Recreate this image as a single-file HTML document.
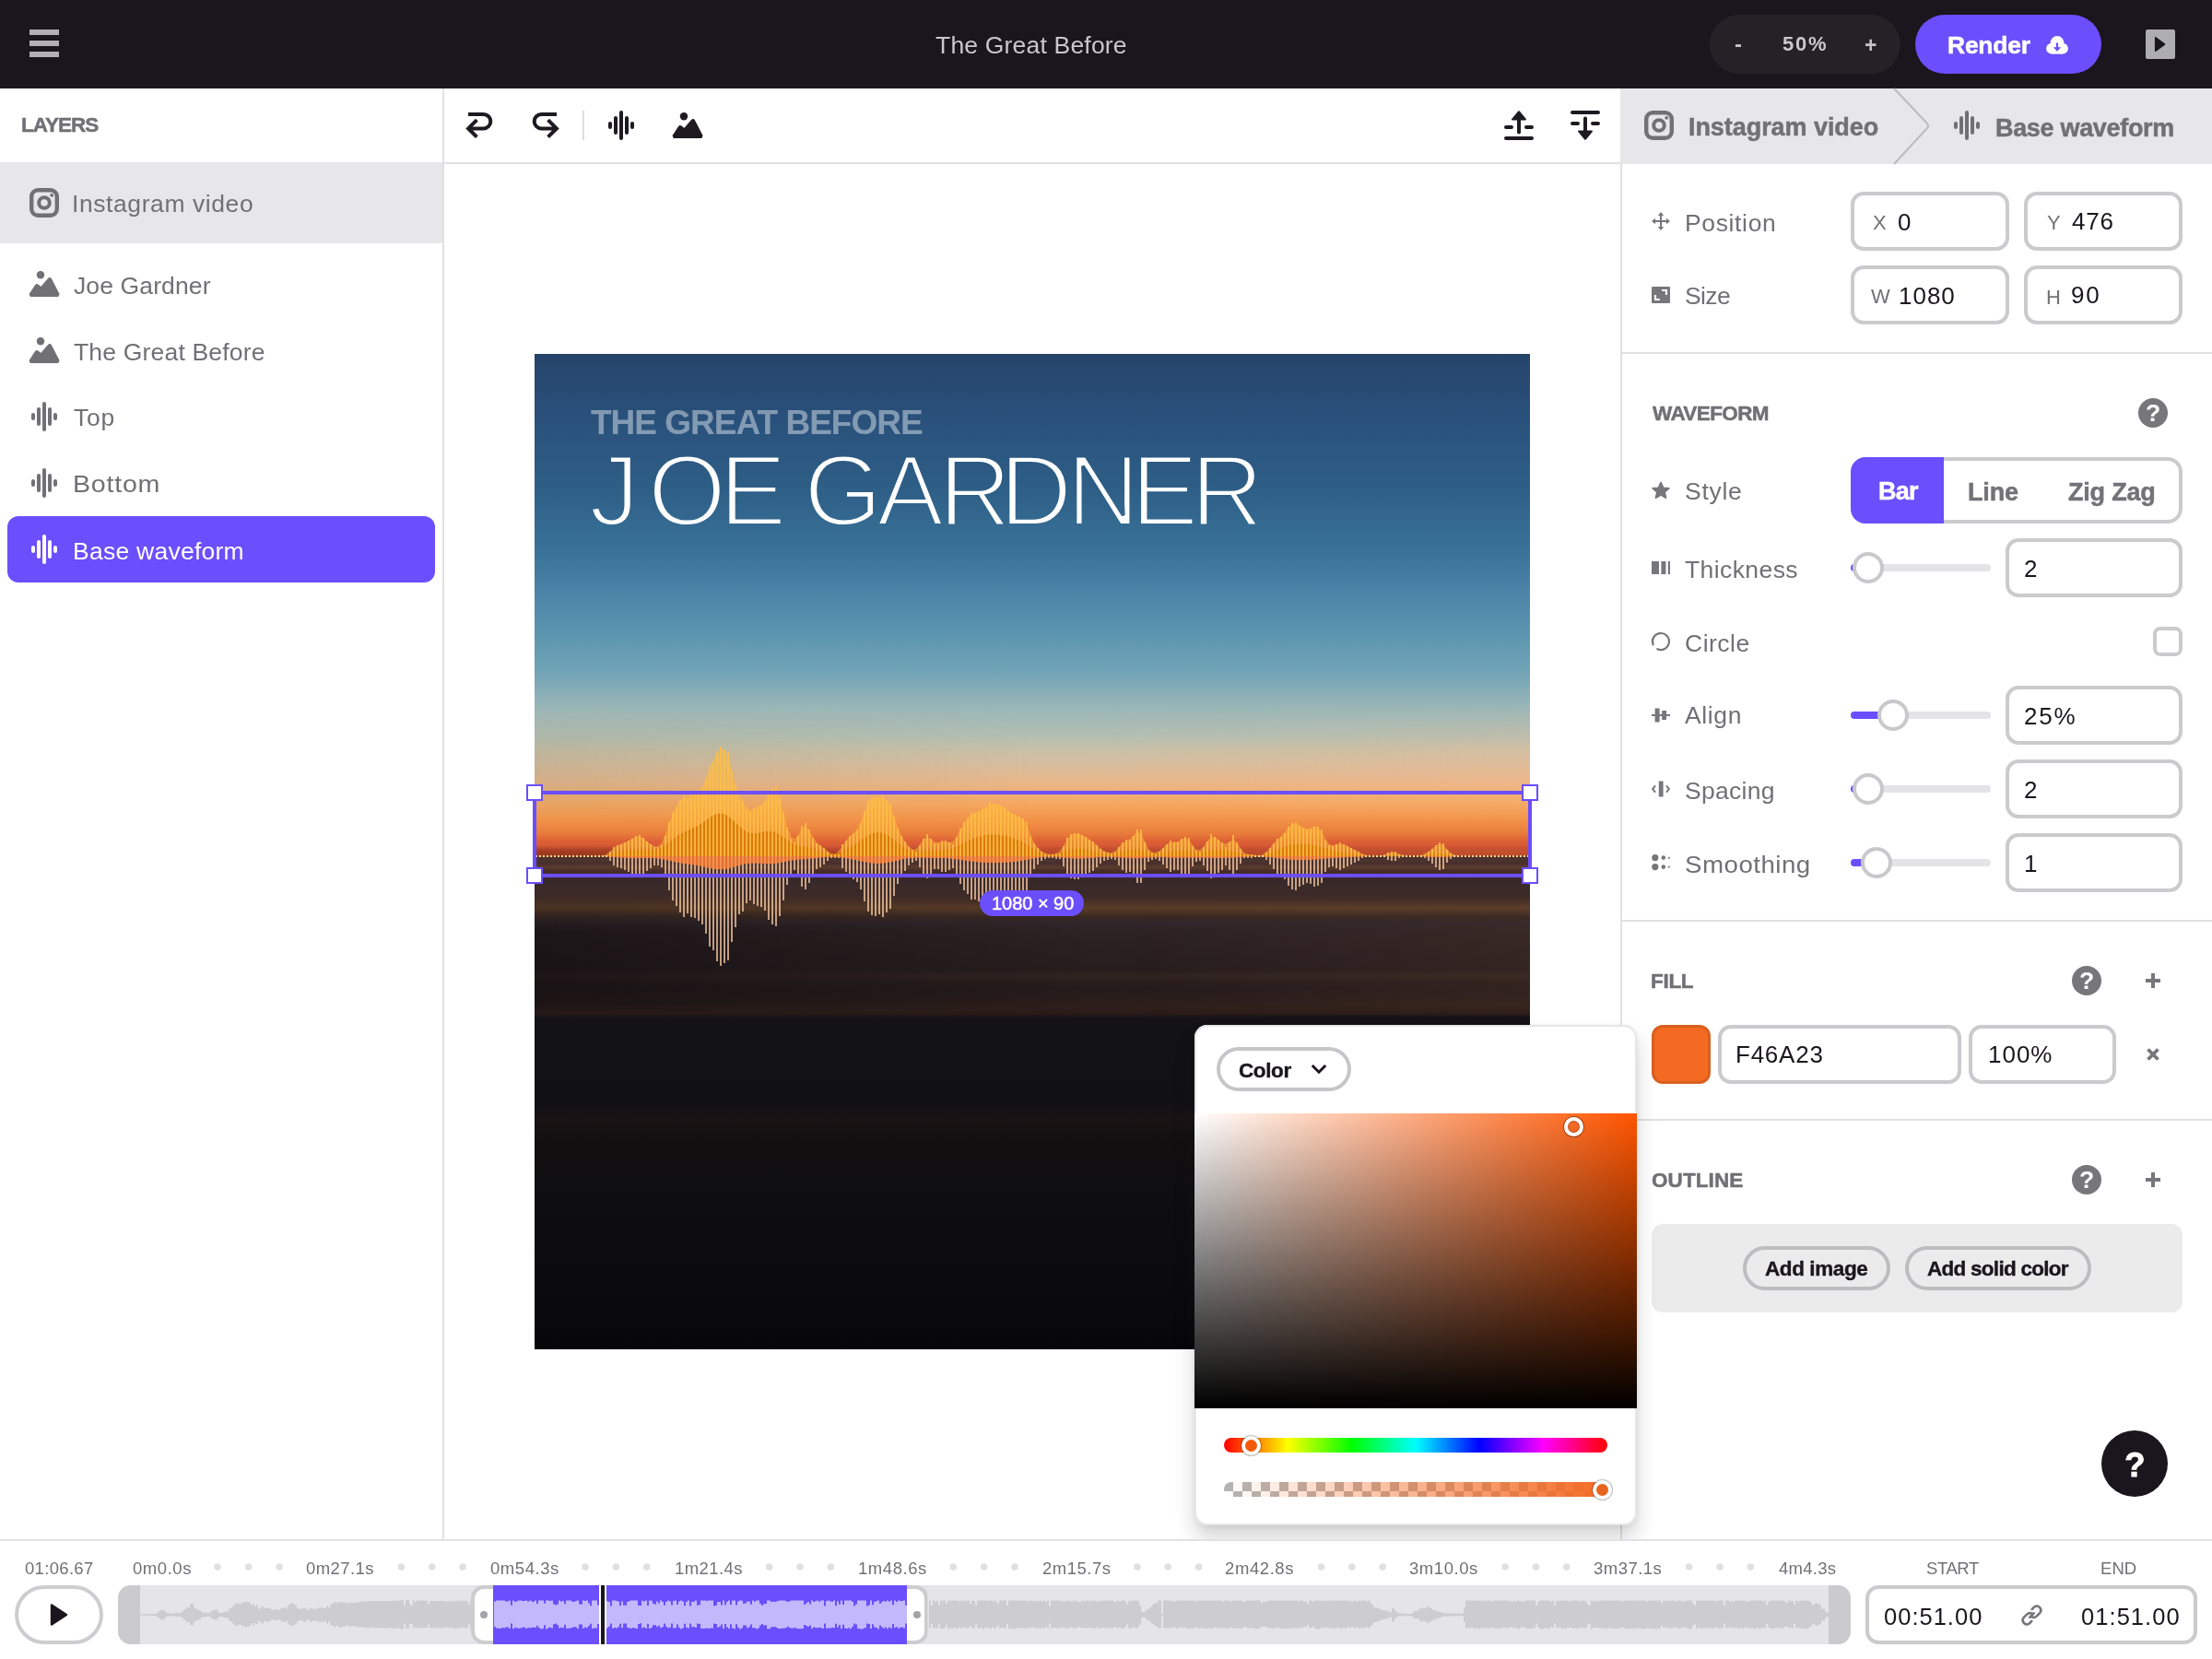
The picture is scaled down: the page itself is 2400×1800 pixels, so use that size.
<!DOCTYPE html>
<html lang="en">
<head>
<meta charset="utf-8">
<title>The Great Before</title>
<style>
*{box-sizing:border-box;margin:0;padding:0}
html,body{width:2400px;height:1800px;overflow:hidden;background:#fff}
body{font-family:"Liberation Sans",sans-serif;color:#717075;position:relative}
.abs{position:absolute}
.t{position:absolute;white-space:nowrap;line-height:1;will-change:transform}
.b{font-weight:700}
svg{position:absolute;overflow:visible}
/* top bar */
#top{left:0;top:0;width:2400px;height:96px;background:#19161d}
/* panels */
#left{left:0;top:96px;width:482px;height:1576px;border-right:2px solid #e1e1e4;background:#fff}
#toolbar{left:482px;top:96px;width:1276px;height:82px;border-bottom:2px solid #e1e1e4;background:#fff}
#right{left:1758px;top:96px;width:642px;height:1576px;border-left:2px solid #e1e1e4;background:#fff}
#crumb{left:1758px;top:96px;width:642px;height:82px;background:#e7e7e9}
#bottom{left:0;top:1670px;width:2400px;height:130px;border-top:2px solid #e1e1e4;background:#fff}
.row{position:absolute;left:0;width:480px;height:72px}
.lbl{font-size:26.5px;color:#717075}
.inp{position:absolute;border:4px solid #cbcbce;border-radius:14px;background:#fff;height:64px}
.inp .t{top:17px;font-size:26px;color:#19161d}
.inp .p{color:#717075}
.div{position:absolute;left:1760px;width:640px;height:2px;background:#e1e1e4}
.plab{font-size:26.5px;color:#717075}
.hd{font-size:22.5px;font-weight:700;color:#717075;-webkit-text-stroke:.5px #717075}
.track{position:absolute;height:8px;border-radius:4px;background:#e4e4e6}
.fillt{position:absolute;height:8px;border-radius:4px;background:#6b4efc}
.thumb{position:absolute;width:34px;height:34px;border-radius:50%;border:4px solid #c9c9cc;background:#fff}
.pill{position:absolute;height:48px;border:4px solid #bdbdc0;border-radius:24px;background:transparent}
.pill .t{font-size:22.5px;font-weight:700;color:#19161d;top:9px;-webkit-text-stroke:.4px #19161d}
</style>
</head>
<body>
<!-- TOP BAR -->
<div id="top" class="abs">
  <div class="abs" style="left:32px;top:32px;width:32px;height:6px;background:#b1b0b4"></div>
  <div class="abs" style="left:32px;top:44px;width:32px;height:6px;background:#b1b0b4"></div>
  <div class="abs" style="left:32px;top:56px;width:32px;height:6px;background:#b1b0b4"></div>
  <div class="t" id="ttl" style="left:1015.38px;top:36.16px;font-size:26.5px;color:#c9c8cd;letter-spacing:0.19px">The Great Before</div>
  <div class="abs" style="left:1855px;top:16px;width:207px;height:64px;border-radius:32px;background:#242127"></div>
  <div class="t b" style="left:1882px;top:35.5px;font-size:24px;color:#c4c3c7">-</div>
  <div class="t b" id="pct" style="left:1933.79px;top:37.3px;font-size:22px;color:#c9c8cc;letter-spacing:1.75px">50%</div>
  <div class="t b" style="left:2022.5px;top:38px;font-size:23px;color:#c4c3c7">+</div>
  <div class="abs" style="left:2078px;top:16px;width:202px;height:64px;border-radius:32px;background:#6b4efc"></div>
  <div class="t b" id="rnd" style="left:2113.06px;top:36.1px;font-size:26.5px;color:#fff;letter-spacing:-0.26px;-webkit-text-stroke:.5px #fff">Render</div>
  <svg style="left:2220px;top:39px" width="24" height="20" viewBox="0 0 24 20"><g fill="#fff"><circle cx="12" cy="7.3" r="7.3"/><circle cx="6" cy="13.7" r="5.9"/><circle cx="18" cy="13.7" r="5.9"/><rect x="6" y="10" width="12" height="9.6"/></g><path fill="#6b4efc" d="M10.9 7.6h2.2v4.6h3.1L12 16.8L7.8 12.2h3.1z"/></svg>
  <div class="abs" style="left:2328px;top:32px;width:32px;height:32px;background:#aeadb1;border-radius:2px"></div>
  <svg style="left:2328px;top:32px" width="32" height="32" viewBox="0 0 32 32"><path fill="#19161d" d="M10.8 8.9v14.2l9.6-7.1z" stroke="#19161d" stroke-width="1.8" stroke-linejoin="round"/></svg>
</div>
<!-- ICON DEFS -->
<svg width="0" height="0" style="left:-100px;top:-100px">
  <defs>
    <g id="i-wave"><path d="M2 14v4M8 8v16M14 2v28M20 8v16M26 14v4" fill="none" stroke="currentColor" stroke-width="4" stroke-linecap="round"/></g>
    <g id="i-img"><circle cx="12" cy="4.2" r="4.2" fill="currentColor"/><path d="M1.5 27 L0.6 25.2 L7 15.6 Q7.8 14.6 8.8 15.4 L12.6 18.2 L20.8 8.6 Q22 7.4 23 8.8 L31.5 25.2 L30.6 27 Z" fill="currentColor" stroke="currentColor" stroke-width="2" stroke-linejoin="round"/></g>
    <g id="i-insta"><rect x="2.2" y="2.2" width="27.6" height="27.6" rx="7" fill="none" stroke="currentColor" stroke-width="4.4"/><circle cx="16" cy="16" r="5.8" fill="none" stroke="currentColor" stroke-width="4"/><circle cx="24.2" cy="7.8" r="1.9" fill="currentColor"/></g>
    <g id="i-q"><circle cx="16" cy="16" r="16" fill="#77767b"/></g>
  </defs>
</svg>
<!-- LEFT PANEL -->
<div id="left" class="abs"></div>
<div class="t b" id="layers" style="left:23.45px;top:125.22px;font-size:22.5px;color:#717075;-webkit-text-stroke:.5px #717075;letter-spacing:-0.98px">LAYERS</div>
<div class="abs" style="left:0;top:176px;width:480px;height:88px;background:#e7e7e9"></div>
<svg style="left:32px;top:204px;color:#717075" width="32" height="32"><use href="#i-insta"/></svg>
<div class="t lbl" id="l0" style="left:78.41px;top:208px;letter-spacing:0.58px">Instagram video</div>

<svg style="left:32px;top:294px;color:#717075" width="32" height="28"><use href="#i-img"/></svg>
<div class="t lbl" id="l1" style="left:80.01px;top:296.96px;letter-spacing:0.12px">Joe Gardner</div>
<svg style="left:32px;top:366px;color:#717075" width="32" height="28"><use href="#i-img"/></svg>
<div class="t lbl" id="l2" style="left:80.2px;top:369px;letter-spacing:0.18px">The Great Before</div>
<svg style="left:34px;top:436px;color:#717075" width="28" height="32"><use href="#i-wave"/></svg>
<div class="t lbl" id="l3" style="left:80px;top:439.8px;letter-spacing:0.79px">Top</div>
<svg style="left:34px;top:508px;color:#717075" width="28" height="32"><use href="#i-wave"/></svg>
<div class="t lbl" id="l4" style="left:79.2px;top:512px;letter-spacing:0.69px;transform:scaleX(1.08);transform-origin:0 0">Bottom</div>
<div class="abs" style="left:8px;top:560px;width:464px;height:72px;border-radius:12px;background:#6b4efc"></div>
<svg style="left:34px;top:580px;color:#fff" width="28" height="32"><use href="#i-wave"/></svg>
<div class="t lbl" id="l5" style="left:79.34px;top:585px;color:#fff;letter-spacing:0.25px">Base waveform</div>
<!-- TOOLBAR -->
<div id="toolbar" class="abs"></div>
<svg style="left:504px;top:120px" width="32" height="32" viewBox="0 0 32 32"><path d="M4 4H20.6A7.7 7.7 0 0 1 20.6 19.4H5M13.4 10.1L4.1 19.4L13.4 28.7" fill="none" stroke="#1d1b21" stroke-width="4"/></svg>
<svg style="left:576px;top:120px" width="32" height="32" viewBox="0 0 32 32"><path d="M28 4H11.4A7.7 7.7 0 0 0 11.4 19.4H27M18.6 10.1L27.9 19.4L18.6 28.7" fill="none" stroke="#1d1b21" stroke-width="4"/></svg>
<div class="abs" style="left:632px;top:120px;width:2px;height:32px;background:#dededf"></div>
<svg style="left:660px;top:120px;color:#1d1b21" width="28" height="32"><use href="#i-wave"/></svg>
<svg style="left:730px;top:122px;color:#1d1b21" width="32" height="28"><use href="#i-img"/></svg>
<svg style="left:1632px;top:120px" width="32" height="32" viewBox="0 0 32 32"><path d="M2 30H30M2 18H8M24 18H30M16 23.5V8" fill="none" stroke="#1d1b21" stroke-width="4" stroke-linecap="round"/><path d="M16 1.2L23 9.6H9z" fill="#1d1b21" stroke="#1d1b21" stroke-width="2" stroke-linejoin="round"/></svg>
<svg style="left:1704px;top:120px" width="32" height="32" viewBox="0 0 32 32"><path d="M2 2H30M2 14H8M24 14H30M16 8.5V24" fill="none" stroke="#1d1b21" stroke-width="4" stroke-linecap="round"/><path d="M16 30.8L23 22.4H9z" fill="#1d1b21" stroke="#1d1b21" stroke-width="2" stroke-linejoin="round"/></svg>
<!-- BREADCRUMB -->
<div id="right" class="abs"></div>
<div id="crumb" class="abs"></div>
<svg style="left:1784px;top:120px;color:#717075" width="32" height="32"><use href="#i-insta"/></svg>
<div class="t b" id="c0" style="left:1831.64px;top:125.08px;font-size:27px;color:#717075;-webkit-text-stroke:.5px #717075;letter-spacing:-0.06px">Instagram video</div>
<svg style="left:2050px;top:96px" width="50" height="82" viewBox="0 0 50 82"><path d="M5 0L41 38Q43 40.5 41 43L5 82" fill="none" stroke="#bcbcbf" stroke-width="2"/></svg>
<svg style="left:2120px;top:120px;color:#717075" width="28" height="32"><use href="#i-wave"/></svg>
<div class="t b" id="c1" style="left:2165.49px;top:125.59px;font-size:27px;color:#717075;-webkit-text-stroke:.5px #717075;letter-spacing:-0.32px">Base waveform</div>
<!-- RIGHT PANEL: position/size -->
<svg style="left:1792px;top:230px" width="20" height="20" viewBox="0 0 20 20"><path d="M10 1.5V18.5M1.5 10H18.5" stroke="#77767b" stroke-width="2" fill="none"/><path d="M10 0L13.2 4H6.8zM10 20L13.2 16H6.8zM0 10L4 6.8V13.2zM20 10L16 6.8V13.2z" fill="#77767b"/></svg>
<div class="t plab" id="p0" style="left:1827.89px;top:228.8px;letter-spacing:0.64px">Position</div>
<svg style="left:1792px;top:311px" width="20" height="18" viewBox="0 0 20 18"><rect width="20" height="18" rx="1" fill="#77767b"/><path d="M11 4H16V9M9 14H4V9" fill="none" stroke="#fff" stroke-width="2.2"/></svg>
<div class="t plab" id="p1" style="left:1828.18px;top:308px;letter-spacing:-0.63px">Size</div>
<div class="inp" style="left:2008px;top:208px;width:172px"><div class="t p" id="ix" style="left:19.99px;font-size:22px;top:19.12px">X</div><div class="t" id="vx" style="left:47.28px;top:16.19px">0</div></div>
<div class="inp" style="left:2196px;top:208px;width:172px"><div class="t p" id="iy" style="left:20.6px;font-size:22px;top:19.08px">Y</div><div class="t" id="vy" style="left:48.44px;top:15.4px;letter-spacing:0.78px">476</div></div>
<div class="inp" style="left:2008px;top:288px;width:172px"><div class="t p" id="iw" style="left:18.26px;font-size:22px;top:19.48px">W</div><div class="t" id="vw" style="left:48.26px;top:15.6px;letter-spacing:0.98px">1080</div></div>
<div class="inp" style="left:2196px;top:288px;width:172px"><div class="t p" id="ih" style="left:19.6px;font-size:22px;top:19.56px">H</div><div class="t" id="vh" style="left:47.32px;top:15.39px;letter-spacing:1.88px">90</div></div>
<div class="div" style="top:382px"></div>

<!-- WAVEFORM section -->
<div class="t hd" id="h0" style="left:1792.7px;top:438.22px;letter-spacing:-0.61px">WAVEFORM</div>
<svg style="left:2320px;top:432px" width="32" height="32"><use href="#i-q"/></svg>
<div class="t b" style="left:2327.9px;top:435.4px;font-size:26.5px;color:#fff">?</div>

<svg style="left:1792px;top:522px" width="20" height="20" viewBox="0 0 20 20"><path d="M10 1.2L12.7 7.1L19.1 7.8L14.3 12.1L15.7 18.5L10 15.2L4.3 18.5L5.7 12.1L0.9 7.8L7.3 7.1Z" fill="#77767b" stroke="#77767b" stroke-width="1.4" stroke-linejoin="round"/></svg>
<div class="t plab" id="p2" style="left:1827.5px;top:520.36px;letter-spacing:0.72px">Style</div>
<div class="abs" style="left:2008px;top:496px;width:360px;height:72px;border:4px solid #cbcbce;border-radius:16px;background:#fff"></div>
<div class="abs" style="left:2008px;top:496px;width:101px;height:72px;border-radius:16px 0 0 16px;background:#6b4efc"></div>
<div class="t b" id="s0" style="-webkit-text-stroke:.5px currentColor;left:2037.96px;top:520.48px;font-size:27px;color:#fff;letter-spacing:-0.79px">Bar</div>
<div class="t b" id="s1" style="-webkit-text-stroke:.5px currentColor;left:2135.36px;top:521.28px;font-size:27px;color:#737277;letter-spacing:-0.18px">Line</div>
<div class="t b" id="s2" style="-webkit-text-stroke:.5px currentColor;left:2243.69px;top:521.28px;font-size:27px;color:#737277;letter-spacing:-0.21px">Zig Zag</div>

<svg style="left:1792px;top:609px" width="20" height="14" viewBox="0 0 20 14"><path d="M0 0h8v14H0zM10.4 0h5v14h-5zM17.8 0h2.2v14h-2.2z" fill="#77767b"/></svg>
<div class="t plab" id="p3" style="left:1828.32px;top:604.91px;letter-spacing:0.41px">Thickness</div>
<div class="track" style="left:2008px;top:612px;width:152px"></div>
<div class="fillt" style="left:2008px;top:612px;width:14px"></div>
<div class="thumb" style="left:2010px;top:599px"></div>
<div class="inp" style="left:2176px;top:584px;width:192px"><div class="t" id="n1" style="left:15.82px;top:16px">2</div></div>

<svg style="left:1792px;top:686px" width="20" height="20" viewBox="0 0 20 20"><path d="M1.6 13.4A9 9 0 1 1 6.2 18.2" fill="none" stroke="#77767b" stroke-width="2.2" stroke-linecap="round"/></svg>
<div class="t plab" id="p4" style="left:1827.92px;top:684.99px;letter-spacing:0.5px">Circle</div>
<div class="abs" style="left:2336px;top:680px;width:32px;height:32px;border:4px solid #cbcbce;border-radius:8px;background:#fff"></div>

<svg style="left:1792px;top:766px" width="20" height="20" viewBox="0 0 20 20"><path d="M0 10H20" stroke="#77767b" stroke-width="2"/><path d="M3.6 2.4h5v15h-5zM11.2 5h4.8v10h-4.8z" fill="#77767b"/></svg>
<div class="t plab" id="p5" style="left:1828.07px;top:763.4px;letter-spacing:0.62px">Align</div>
<div class="track" style="left:2008px;top:772px;width:152px"></div>
<div class="fillt" style="left:2008px;top:772px;width:40px"></div>
<div class="thumb" style="left:2037px;top:759px"></div>
<div class="inp" style="left:2176px;top:744px;width:192px"><div class="t" id="n2" style="left:15.88px;top:16.3px;letter-spacing:1.79px">25%</div></div>

<svg style="left:1792px;top:846px" width="20" height="20" viewBox="0 0 20 20"><path d="M7.8 1.5h4.8v17H7.8z" fill="#77767b"/><path d="M4 6.4L1.2 10L4 13.6M16 6.4L18.8 10L16 13.6" fill="none" stroke="#77767b" stroke-width="2"/></svg>
<div class="t plab" id="p6" style="left:1827.5px;top:844.87px;letter-spacing:0.29px">Spacing</div>
<div class="track" style="left:2008px;top:852px;width:152px"></div>
<div class="fillt" style="left:2008px;top:852px;width:14px"></div>
<div class="thumb" style="left:2010px;top:839px"></div>
<div class="inp" style="left:2176px;top:824px;width:192px"><div class="t" id="n3" style="left:15.82px;top:16.32px">2</div></div>

<svg style="left:1792px;top:926px" width="20" height="20" viewBox="0 0 20 20"><g fill="#77767b"><circle cx="3.8" cy="4.6" r="3.6"/><circle cx="3.8" cy="14.6" r="3.6"/><circle cx="12.8" cy="4.6" r="2.3"/><circle cx="12.8" cy="14.6" r="2.3"/><circle cx="18.8" cy="4.8" r="1.1"/><circle cx="18.8" cy="14.6" r="1.1"/></g></svg>
<div class="t plab" id="p7" style="left:1827.64px;top:924.6px;letter-spacing:0.46px;transform:scaleX(1.045);transform-origin:0 0">Smoothing</div>
<div class="track" style="left:2008px;top:932px;width:152px"></div>
<div class="fillt" style="left:2008px;top:932px;width:22px"></div>
<div class="thumb" style="left:2019px;top:919px"></div>
<div class="inp" style="left:2176px;top:904px;width:192px"><div class="t" id="n4" style="left:16.36px;top:16.1px">1</div></div>
<div class="div" style="top:998px"></div>

<!-- FILL -->
<div class="t hd" id="h1" style="left:1791.46px;top:1053.62px;letter-spacing:-0.31px">FILL</div>
<svg style="left:2248px;top:1048px" width="32" height="32"><use href="#i-q"/></svg>
<div class="t b" style="left:2255.9px;top:1051.4px;font-size:26.5px;color:#fff">?</div>
<svg style="left:2327px;top:1055px" width="18" height="18" viewBox="0 0 18 18"><path d="M9 1V17M1 9H17" stroke="#77767b" stroke-width="4"/></svg>
<div class="abs" style="left:1792px;top:1112px;width:64px;height:64px;border-radius:12px;background:#f46a23;border:3px solid #d9601f"></div>
<div class="inp" style="left:1864px;top:1112px;width:264px"><div class="t" id="n5" style="left:15.11px;top:15.4px;letter-spacing:0.76px">F46A23</div></div>
<div class="inp" style="left:2136px;top:1112px;width:160px"><div class="t" id="n6" style="left:17.26px;top:15.4px;letter-spacing:0.99px">100%</div></div>
<svg style="left:2329px;top:1137px" width="14" height="14" viewBox="0 0 14 14"><path d="M1.5 1.5L12.5 12.5M12.5 1.5L1.5 12.5" stroke="#77767b" stroke-width="3.8"/></svg>
<div class="div" style="top:1214px"></div>

<!-- OUTLINE -->
<div class="t hd" id="h2" style="left:1792px;top:1269.82px;letter-spacing:0.09px">OUTLINE</div>
<svg style="left:2248px;top:1264px" width="32" height="32"><use href="#i-q"/></svg>
<div class="t b" style="left:2255.9px;top:1267.4px;font-size:26.5px;color:#fff">?</div>
<svg style="left:2327px;top:1271px" width="18" height="18" viewBox="0 0 18 18"><path d="M9 1V17M1 9H17" stroke="#77767b" stroke-width="4"/></svg>
<div class="abs" style="left:1792px;top:1328px;width:576px;height:96px;border-radius:12px;background:#ebebec"></div>
<div class="pill" style="left:1891px;top:1352px;width:160px"><div class="t" id="b0" style="left:20.44px;top:10px;letter-spacing:-0.41px">Add image</div></div>
<div class="pill" style="left:2067px;top:1352px;width:202px"><div class="t" id="b1" style="left:20px;top:10px;letter-spacing:-0.73px">Add solid color</div></div>
<!-- Help FAB -->
<div class="abs" style="left:2280px;top:1552px;width:72px;height:72px;border-radius:50%;background:#19161d"></div>
<div class="t b" style="left:2305px;top:1570.8px;font-size:37px;color:#fff;-webkit-text-stroke:.8px #fff">?</div>
<!-- CANVAS -->
<div class="abs" id="img" style="left:580px;top:384px;width:1080px;height:1080px;background:linear-gradient(180deg,#26446a 0px,#29507a 66px,#2e5f87 148px,#3a7399 216px,#4a83a6 256px,#5d96b0 306px,#6fa3b6 343px,#9db8b8 387px,#b5bfb2 416px,#c9c0a8 430px,#d5bea0 443px,#eab689 466px,#f5a862 488px,#f29247 506px,#e87a3a 521px,#dd6134 528px,#d85a35 533px,#c24e30 537px,#bd4a2b 540px,#b8472a 542px,#bb4a28 544px,#6a3428 545.5px,#4d3030 546.5px,#4a352c 550px,#4a2d2e 553px,#56392c 555.5px,#583b2b 558px,#4a2e2a 560px,#36282a 571px,#3a2a29 578px,#3b2a27 588px,#4a3226 595px,#5a3d28 601px,#4a3224 606px,#382823 611px,#31262a 617px,#2d2224 627px,#2b2021 641px,#291e20 655px,#271d1e 668px,#31231f 675px,#281d1d 682px,#251b1c 689px,#2a1d1b 702px,#2e1f1a 710px,#2a1c18 716px,#191519 719px,#131216 722px,#111114 816px,#1a1314 828px,#120f10 853px,#0e0e10 916px,#09090b 1056px,#060507 1080px)">
<div class="abs" id="hmod3" style="left:0;top:380px;width:1080px;height:130px;background:linear-gradient(90deg,rgba(140,140,110,.2) 0,rgba(140,140,110,0) 50%,rgba(255,185,135,0) 55%,rgba(255,185,135,.2) 100%);-webkit-mask-image:linear-gradient(180deg,transparent 0,#000 50px,#000 95px,transparent 130px)"></div>
<div class="abs" id="hmod2" style="left:0;top:534px;width:1080px;height:10px;background:linear-gradient(90deg,rgba(110,30,10,.35) 0,rgba(110,30,10,0) 45%,rgba(255,120,60,0) 60%,rgba(255,120,60,.14) 100%);-webkit-mask-image:linear-gradient(180deg,transparent 0,#000 6px,#000 10px)"></div>
<div class="abs" id="hmod" style="left:0;top:590px;width:1080px;height:130px;background:linear-gradient(90deg,rgba(14,11,15,.5) 0,rgba(14,11,15,.3) 25%,rgba(14,11,15,0) 55%,rgba(120,80,55,.0) 60%,rgba(120,80,55,.16) 100%);-webkit-mask-image:linear-gradient(180deg,transparent 0,rgba(0,0,0,.45) 12px,rgba(0,0,0,.45) 22px,#000 36px,#000 116px,transparent 130px)"></div>
<div class="t b" id="sub" style="left:60.93px;top:55.7px;font-size:37px;color:rgba(255,255,255,.42);letter-spacing:-0.99px">THE GREAT BEFORE</div>
<svg id="bigsvg" style="left:0;top:0" width="1080" height="330" viewBox="0 0 1080 330"><defs><linearGradient id="sky" gradientUnits="userSpaceOnUse" x1="0" y1="0" x2="0" y2="1080"><stop offset="0.00000" stop-color="#26446a"/><stop offset="0.06111" stop-color="#29507a"/><stop offset="0.13704" stop-color="#2e5f87"/><stop offset="0.20000" stop-color="#3a7399"/><stop offset="0.23704" stop-color="#4a83a6"/><stop offset="0.28333" stop-color="#5d96b0"/></linearGradient></defs><text id="bigt" x="59.2 123.0 200.6 278.0 292.3 371.2 438.5 504.4 577.4 647.2 712.1" y="185.6" font-family="Liberation Sans, sans-serif" font-size="109" fill="#fff" stroke="url(#sky)" stroke-width="3.8" stroke-linejoin="miter" stroke-miterlimit="3">JOE GARDNER</text></svg>
<svg style="left:0;top:0" width="1080" height="1080" viewBox="0 0 1080 1080">
<path d="M-1 545H1080" stroke="#7a3a06" stroke-width="2" stroke-dasharray="2 2" fill="none"/>
<path d="M0 545L2 545.0L6 545.0L10 545.0L14 545.0L18 545.0L22 545.0L26 545.0L30 545.0L34 545.0L38 545.0L42 545.0L46 545.0L50 545.0L54 545.0L58 545.0L62 545.0L66 545.0L70 545.0L74 545.0L78 542.7L82 539.7L86 536.0L90 533.3L94 531.7L98 530.0L102 528.0L106 525.7L110 523.7L114 523.3L118 525.3L122 528.7L126 532.0L130 534.0L134 534.3L138 530.3L142 521.3L146 509.3L150 498.7L154 490.7L158 484.7L162 482.0L166 480.3L170 480.0L174 477.3L178 474.7L182 469.0L186 459.7L190 450.3L194 440.3L198 433.3L202 428.7L206 429.0L210 437.7L214 450.7L218 467.3L222 478.3L226 487.0L230 492.0L234 494.7L238 493.7L242 491.3L246 489.0L250 484.0L254 477.7L258 472.0L262 473.3L266 482.0L270 497.0L274 512.3L278 523.3L282 526.3L286 521.7L290 514.7L294 512.3L298 516.7L302 524.0L306 529.7L310 533.3L314 536.3L318 539.7L322 542.0L326 543.0L330 539.3L334 534.3L338 527.7L342 523.7L346 520.0L350 515.3L354 507.3L358 496.7L362 487.3L366 482.0L370 481.0L374 480.3L378 481.7L382 483.7L386 491.3L390 501.7L394 513.3L398 522.3L402 529.0L406 534.0L410 537.7L414 537.0L418 533.0L422 526.7L426 524.3L430 526.0L434 529.3L438 530.0L442 529.0L446 528.7L450 530.0L454 528.7L458 523.7L462 515.7L466 509.0L470 503.3L474 500.0L478 497.3L482 496.0L486 494.0L490 491.0L494 489.0L498 488.0L502 489.0L506 490.3L510 492.7L514 495.7L518 498.3L522 500.3L526 502.0L530 504.7L534 512.0L538 521.0L542 530.3L546 535.7L550 539.3L554 541.7L558 542.7L562 542.7L566 542.3L570 539.3L574 533.7L578 526.7L582 522.0L586 520.3L590 520.7L594 522.0L598 524.3L602 526.7L606 529.7L610 533.0L614 536.7L618 539.3L622 541.0L626 541.3L630 539.3L634 535.3L638 530.7L642 528.3L646 526.0L650 522.3L654 518.3L658 520.7L662 528.3L666 536.7L670 540.7L674 541.0L678 539.3L682 536.0L686 532.0L690 530.0L694 529.3L698 528.7L702 526.7L706 525.0L710 527.7L714 532.7L718 537.7L722 538.0L726 534.7L730 528.3L734 524.7L738 524.0L742 527.0L746 530.7L750 531.7L754 529.0L758 527.3L762 529.7L766 536.7L770 541.0L774 543.0L778 543.3L782 543.7L786 545.0L790 543.0L794 540.3L798 536.0L802 531.0L806 527.0L810 523.3L814 519.0L818 514.0L822 510.0L826 509.7L830 511.3L834 514.0L838 515.0L842 514.3L846 513.3L850 513.7L854 519.0L858 525.7L862 531.7L866 533.0L870 532.0L874 531.3L878 532.0L882 534.0L886 536.0L890 538.0L894 540.3L898 542.3L902 543.7L906 545.0L910 545.0L914 545.0L918 545.0L922 543.0L926 541.7L930 540.3L934 541.0L938 542.3L942 543.7L946 545.0L950 545.0L954 545.0L958 545.0L962 543.7L966 542.3L970 540.0L974 536.7L978 533.3L982 531.3L986 533.0L990 537.0L994 541.3L998 543.3L1002 545.0L1006 545.0L1010 545.0L1014 545.0L1018 545.0L1022 545.0L1026 545.0L1030 545.0L1034 545.0L1038 545.0L1042 545.0L1046 545.0L1050 545.0L1054 545.0L1058 545.0L1062 545.0L1066 545.0L1070 545.0L1074 545.0L1078 545.0L1080 545Z" fill="rgba(255,186,58,.5)"/>
<path d="M0 545L2 545.0L6 545.0L10 545.0L14 545.0L18 545.0L22 545.0L26 545.0L30 545.0L34 545.0L38 545.0L42 545.0L46 545.0L50 545.0L54 545.0L58 545.0L62 545.0L66 545.0L70 545.0L74 544.7L78 544.1L82 543.3L86 542.3L90 541.3L94 540.3L98 539.3L102 538.6L106 538.1L110 537.9L114 537.9L118 538.3L122 538.7L126 538.8L130 538.4L134 537.4L138 535.5L142 532.9L146 529.9L150 526.7L154 523.7L158 521.0L162 518.9L166 517.0L170 515.4L174 513.6L178 511.4L182 508.9L186 506.0L190 503.0L194 500.5L198 498.8L202 498.4L206 499.3L210 501.5L214 504.8L218 508.6L222 512.4L226 515.8L230 518.4L234 519.9L238 520.4L242 519.9L246 519.0L250 518.1L254 517.7L258 518.1L262 519.5L266 521.8L270 524.6L274 527.5L278 530.1L282 532.1L286 533.5L290 534.4L294 535.1L298 535.9L302 536.9L306 538.3L310 539.9L314 541.3L318 542.3L322 542.7L326 542.4L330 541.6L334 540.3L338 538.5L342 536.2L346 533.5L350 530.7L354 527.8L358 525.0L362 522.5L366 520.5L370 519.2L374 519.0L378 519.8L382 521.5L386 524.1L390 527.2L394 530.5L398 533.7L402 536.3L406 538.3L410 539.4L414 539.9L418 539.8L422 539.4L426 539.0L430 538.7L434 538.6L438 538.5L442 538.4L446 538.1L450 537.4L454 536.1L458 534.5L462 532.6L466 530.6L470 528.6L474 526.7L478 525.1L482 523.8L486 522.8L490 522.0L494 521.5L498 521.4L502 521.5L506 521.9L510 522.6L514 523.5L518 524.7L522 526.2L526 528.0L530 530.1L534 532.5L538 535.1L542 537.6L546 539.8L550 541.7L554 543.0L558 543.7L562 543.5L566 542.9L570 541.8L574 540.4L578 539.1L582 537.9L586 537.0L590 536.6L594 536.7L598 537.3L602 538.3L606 539.4L610 540.6L614 541.6L618 542.3L622 542.6L626 542.6L630 542.1L634 541.2L638 540.0L642 538.8L646 538.0L650 537.6L654 537.6L658 538.3L662 539.3L666 540.3L670 541.2L674 541.7L678 541.9L682 541.6L686 540.9L690 540.1L694 539.4L698 539.0L702 539.0L706 539.2L710 539.6L714 539.9L718 540.1L722 540.1L726 539.9L730 539.5L734 539.2L738 538.7L742 538.5L746 538.6L750 538.9L754 539.5L758 540.3L762 541.1L766 542.1L770 543.0L774 543.8L778 544.4L782 544.7L786 544.5L790 543.8L794 542.7L798 541.4L802 539.7L806 538.0L810 536.2L814 534.6L818 533.3L822 532.4L826 531.8L830 531.5L834 531.5L838 531.7L842 532.3L846 533.2L850 534.2L854 535.4L858 536.6L862 537.8L866 538.8L870 539.7L874 540.4L878 541.1L882 541.7L886 542.3L890 543.0L894 543.7L898 544.4L902 544.9L906 545.0L910 545.0L914 545.0L918 545.0L922 545.0L926 545.0L930 545.0L934 545.0L938 545.0L942 545.0L946 545.0L950 545.0L954 545.0L958 545.0L962 544.7L966 544.1L970 543.4L974 542.8L978 542.4L982 542.3L986 542.5L990 543.0L994 543.6L998 544.3L1002 544.9L1006 545.0L1010 545.0L1014 545.0L1018 545.0L1022 545.0L1026 545.0L1030 545.0L1034 545.0L1038 545.0L1042 545.0L1046 545.0L1050 545.0L1054 545.0L1058 545.0L1062 545.0L1066 545.0L1070 545.0L1074 545.0L1078 545.0L1080 545Z" fill="#dc7a0c"/>
<path id="pl" d="M0 545L2 545.0L6 545.0L10 545.0L14 545.0L18 545.0L22 545.0L26 545.0L30 545.0L34 545.0L38 545.0L42 545.0L46 545.0L50 545.0L54 545.0L58 545.0L62 545.0L66 545.0L70 545.0L74 545.1L78 545.3L82 545.5L86 545.8L90 546.1L94 546.4L98 546.7L102 547.0L106 547.1L110 547.2L114 547.1L118 547.0L122 546.9L126 546.9L130 547.0L134 547.3L138 547.9L142 548.7L146 549.6L150 550.5L154 551.5L158 552.3L162 552.9L166 553.5L170 554.0L174 554.5L178 555.2L182 556.0L186 556.8L190 557.7L194 558.5L198 559.0L202 559.1L206 558.9L210 558.2L214 557.2L218 556.0L222 554.9L226 553.8L230 553.1L234 552.6L238 552.5L242 552.6L246 552.9L250 553.1L254 553.3L258 553.2L262 552.7L266 552.0L270 551.2L274 550.3L278 549.5L282 548.9L286 548.5L290 548.2L294 548.0L298 547.8L302 547.4L306 547.0L310 546.5L314 546.1L318 545.8L322 545.7L326 545.8L330 546.0L334 546.4L338 547.0L342 547.7L346 548.5L350 549.3L354 550.2L358 551.1L362 551.8L366 552.4L370 552.8L374 552.9L378 552.6L382 552.1L386 551.3L390 550.4L394 549.4L398 548.4L402 547.6L406 547.0L410 546.7L414 546.6L418 546.6L422 546.7L426 546.8L430 546.9L434 546.9L438 547.0L442 547.0L446 547.1L450 547.3L454 547.7L458 548.2L462 548.8L466 549.4L470 550.0L474 550.5L478 551.0L482 551.4L486 551.7L490 552.0L494 552.1L498 552.2L502 552.1L506 552.0L510 551.8L514 551.5L518 551.2L522 550.7L526 550.2L530 549.5L534 548.8L538 548.0L542 547.3L546 546.6L550 546.0L554 545.6L558 545.4L562 545.4L566 545.6L570 546.0L574 546.4L578 546.8L582 547.2L586 547.4L590 547.5L594 547.5L598 547.3L602 547.0L606 546.7L610 546.3L614 546.0L618 545.8L622 545.7L626 545.7L630 545.9L634 546.2L638 546.5L642 546.9L646 547.1L650 547.3L654 547.2L658 547.0L662 546.7L666 546.4L670 546.2L674 546.0L678 545.9L682 546.0L686 546.2L690 546.5L694 546.7L698 546.8L702 546.8L706 546.8L710 546.6L714 546.5L718 546.5L722 546.5L726 546.6L730 546.7L734 546.8L738 546.9L742 547.0L746 546.9L750 546.8L754 546.7L758 546.4L762 546.2L766 545.9L770 545.6L774 545.4L778 545.2L782 545.1L786 545.2L790 545.4L794 545.7L798 546.1L802 546.6L806 547.1L810 547.7L814 548.1L818 548.5L822 548.8L826 549.0L830 549.1L834 549.1L838 549.0L842 548.8L846 548.6L850 548.3L854 547.9L858 547.6L862 547.2L866 546.9L870 546.6L874 546.4L878 546.2L882 546.0L886 545.8L890 545.6L894 545.4L898 545.2L902 545.0L906 545.0L910 545.0L914 545.0L918 545.0L922 545.0L926 545.0L930 545.0L934 545.0L938 545.0L942 545.0L946 545.0L950 545.0L954 545.0L958 545.0L962 545.1L966 545.3L970 545.5L974 545.7L978 545.8L982 545.8L986 545.8L990 545.6L994 545.4L998 545.2L1002 545.0L1006 545.0L1010 545.0L1014 545.0L1018 545.0L1022 545.0L1026 545.0L1030 545.0L1034 545.0L1038 545.0L1042 545.0L1046 545.0L1050 545.0L1054 545.0L1058 545.0L1062 545.0L1066 545.0L1070 545.0L1074 545.0L1078 545.0L1080 545Z" fill="#e66f2b"/>
<path d="M82 545v-5M86 545v-10M90 545v-12M94 545v-13M98 545v-15M102 545v-17M106 545v-19M110 545v-22M114 545v-23M118 545v-20M122 545v-16M126 545v-13M130 545v-10M134 545v-10M138 545v-12M142 545v-22M146 545v-37M150 545v-48M154 545v-54M158 545v-61M162 545v-66M166 545v-62M170 545v-66M174 545v-67M178 545v-70M182 545v-74M186 545v-84M190 545v-98M194 545v-102M198 545v-114M202 545v-119M206 545v-116M210 545v-113M214 545v-93M218 545v-77M222 545v-63M226 545v-60M230 545v-51M234 545v-48M238 545v-52M242 545v-54M246 545v-55M250 545v-59M254 545v-69M258 545v-74M262 545v-76M266 545v-65M270 545v-48M274 545v-31M278 545v-19M282 545v-15M286 545v-22M290 545v-33M294 545v-36M298 545v-29M302 545v-20M306 545v-14M310 545v-12M314 545v-9M318 545v-5M322 545v-2M326 545v-2M330 545v-2M334 545v-13M338 545v-17M342 545v-22M346 545v-25M350 545v-28M354 545v-36M358 545v-49M362 545v-60M366 545v-64M370 545v-65M374 545v-63M378 545v-66M382 545v-61M386 545v-57M390 545v-43M394 545v-30M398 545v-22M402 545v-16M406 545v-10M410 545v-7M414 545v-5M418 545v-12M422 545v-19M426 545v-24M430 545v-19M434 545v-14M438 545v-14M442 545v-17M446 545v-17M450 545v-15M454 545v-13M458 545v-21M462 545v-30M466 545v-37M470 545v-41M474 545v-47M478 545v-47M482 545v-49M486 545v-51M490 545v-53M494 545v-58M498 545v-57M502 545v-56M506 545v-55M510 545v-53M514 545v-49M518 545v-46M522 545v-45M526 545v-43M530 545v-41M534 545v-37M538 545v-21M542 545v-14M546 545v-9M550 545v-5M554 545v-3M558 545v-2M562 545v-2M566 545v-3M570 545v-3M574 545v-11M578 545v-20M582 545v-24M586 545v-25M590 545v-25M594 545v-23M598 545v-21M602 545v-18M606 545v-16M610 545v-12M614 545v-8M618 545v-5M622 545v-4M626 545v-3M630 545v-4M634 545v-10M638 545v-15M642 545v-18M646 545v-17M650 545v-22M654 545v-29M658 545v-29M662 545v-15M666 545v-6M670 545v-4M674 545v-3M678 545v-5M682 545v-9M686 545v-13M690 545v-17M694 545v-15M698 545v-15M702 545v-19M706 545v-21M710 545v-20M714 545v-11M718 545v-6M722 545v-5M726 545v-10M730 545v-16M734 545v-24M738 545v-21M742 545v-18M746 545v-15M750 545v-10M754 545v-15M758 545v-23M762 545v-15M766 545v-8M770 545v-2M774 545v-2M778 545v-2M794 545v-4M798 545v-9M802 545v-14M806 545v-19M810 545v-21M814 545v-25M818 545v-32M822 545v-36M826 545v-37M830 545v-33M834 545v-31M838 545v-29M842 545v-30M846 545v-33M850 545v-32M854 545v-29M858 545v-17M862 545v-12M866 545v-11M870 545v-13M874 545v-15M878 545v-13M882 545v-11M886 545v-9M890 545v-7M894 545v-5M898 545v-2M926 545v-4M930 545v-5M934 545v-5M938 545v-2M966 545v-2M970 545v-5M974 545v-8M978 545v-12M982 545v-15M986 545v-14M990 545v-7M994 545v-3" stroke="rgba(252,192,70,.82)" stroke-width="2" fill="none"/>
<path d="M82 545v5M86 545v10M90 545v12M94 545v13M98 545v15M102 545v17M106 545v19M110 545v22M114 545v23M118 545v20M122 545v16M126 545v13M130 545v10M134 545v10M138 545v12M142 545v22M146 545v37M150 545v48M154 545v54M158 545v61M162 545v66M166 545v62M170 545v66M174 545v67M178 545v70M182 545v74M186 545v84M190 545v98M194 545v102M198 545v114M202 545v119M206 545v116M210 545v113M214 545v93M218 545v77M222 545v63M226 545v60M230 545v51M234 545v48M238 545v52M242 545v54M246 545v55M250 545v59M254 545v69M258 545v74M262 545v76M266 545v65M270 545v48M274 545v31M278 545v19M282 545v15M286 545v22M290 545v33M294 545v36M298 545v29M302 545v20M306 545v14M310 545v12M314 545v9M318 545v5M322 545v2M326 545v2M330 545v2M334 545v13M338 545v17M342 545v22M346 545v25M350 545v28M354 545v36M358 545v49M362 545v60M366 545v64M370 545v65M374 545v63M378 545v66M382 545v61M386 545v57M390 545v43M394 545v30M398 545v22M402 545v16M406 545v10M410 545v7M414 545v5M418 545v12M422 545v19M426 545v24M430 545v19M434 545v14M438 545v14M442 545v17M446 545v17M450 545v15M454 545v13M458 545v21M462 545v30M466 545v37M470 545v41M474 545v47M478 545v47M482 545v49M486 545v51M490 545v53M494 545v58M498 545v57M502 545v56M506 545v55M510 545v53M514 545v49M518 545v46M522 545v45M526 545v43M530 545v41M534 545v37M538 545v21M542 545v14M546 545v9M550 545v5M554 545v3M558 545v2M562 545v2M566 545v3M570 545v3M574 545v11M578 545v20M582 545v24M586 545v25M590 545v25M594 545v23M598 545v21M602 545v18M606 545v16M610 545v12M614 545v8M618 545v5M622 545v4M626 545v3M630 545v4M634 545v10M638 545v15M642 545v18M646 545v17M650 545v22M654 545v29M658 545v29M662 545v15M666 545v6M670 545v4M674 545v3M678 545v5M682 545v9M686 545v13M690 545v17M694 545v15M698 545v15M702 545v19M706 545v21M710 545v20M714 545v11M718 545v6M722 545v5M726 545v10M730 545v16M734 545v24M738 545v21M742 545v18M746 545v15M750 545v10M754 545v15M758 545v23M762 545v15M766 545v8M770 545v2M774 545v2M778 545v2M794 545v4M798 545v9M802 545v14M806 545v19M810 545v21M814 545v25M818 545v32M822 545v36M826 545v37M830 545v33M834 545v31M838 545v29M842 545v30M846 545v33M850 545v32M854 545v29M858 545v17M862 545v12M866 545v11M870 545v13M874 545v15M878 545v13M882 545v11M886 545v9M890 545v7M894 545v5M898 545v2M926 545v4M930 545v5M934 545v5M938 545v2M966 545v2M970 545v5M974 545v8M978 545v12M982 545v15M986 545v14M990 545v7M994 545v3" stroke="rgba(255,208,168,.72)" stroke-width="2" fill="none"/>
<use href="#pl" opacity=".5"/>
<path d="M2 544v2M6 544v2M10 544v2M14 544v2M18 544v2M22 544v2M26 544v2M30 544v2M34 544v2M38 544v2M42 544v2M46 544v2M50 544v2M54 544v2M58 544v2M62 544v2M66 544v2M70 544v2M74 544v2M78 544v2M782 544v2M786 544v2M790 544v2M902 544v2M906 544v2M910 544v2M914 544v2M918 544v2M922 544v2M942 544v2M946 544v2M950 544v2M954 544v2M958 544v2M962 544v2M998 544v2M1002 544v2M1006 544v2M1010 544v2M1014 544v2M1018 544v2M1022 544v2M1026 544v2M1030 544v2M1034 544v2M1038 544v2M1042 544v2M1046 544v2M1050 544v2M1054 544v2M1058 544v2M1062 544v2M1066 544v2M1070 544v2M1074 544v2M1078 544v2" stroke="#fbd3a3" stroke-width="2" fill="none"/>
</svg>
</div>
<!-- selection -->
<div class="abs" style="left:578px;top:858px;width:1084px;height:94px;border:4px solid #6b4efc"></div>
<div class="abs" style="left:571px;top:851px;width:18px;height:18px;border:2px solid #6b4efc;background:#fff"></div>
<div class="abs" style="left:1651px;top:851px;width:18px;height:18px;border:2px solid #6b4efc;background:#fff"></div>
<div class="abs" style="left:571px;top:941px;width:18px;height:18px;border:2px solid #6b4efc;background:#fff"></div>
<div class="abs" style="left:1651px;top:941px;width:18px;height:18px;border:2px solid #6b4efc;background:#fff"></div>
<div class="abs" style="left:1063px;top:966px;width:113px;height:28px;border-radius:14px;background:#6b4efc"></div>
<div class="t" id="dim" style="left:1076.21px;top:969.98px;font-size:20px;color:#fff;-webkit-text-stroke:.5px #fff;letter-spacing:-0.03px">1080 × 90</div>
<!-- COLOR PICKER POPUP -->
<div class="abs" style="left:1296px;top:1112px;width:480px;height:543px;border-radius:14px;background:#fff;box-shadow:0 0 0 2px #e6e6e8 inset,0 14px 22px rgba(25,22,29,.18),0 2px 6px rgba(25,22,29,.08)"></div>
<div class="pill" style="left:1320px;top:1136px;width:146px;border-color:#c6c6c9"><div class="t" id="pc" style="left:19.95px;top:10.6px;letter-spacing:-0.4px">Color</div></div>
<svg style="left:1422px;top:1154px" width="18" height="12" viewBox="0 0 18 12"><path d="M1.8 2L9 9.2L16.2 2" fill="none" stroke="#19161d" stroke-width="3"/></svg>
<div class="abs" style="left:1296px;top:1208px;width:480px;height:320px;background:linear-gradient(to top,#000,rgba(0,0,0,0)),linear-gradient(to right,#fff,rgba(255,255,255,0)),#ff5500"></div>
<div class="abs" style="left:1696.5px;top:1211.5px;width:21px;height:21px;border-radius:50%;border:4.5px solid #fff;box-shadow:0 0 0 1px rgba(0,0,0,.35),inset 0 0 0 1px rgba(0,0,0,.3)"></div>
<div class="abs" style="left:1328px;top:1560px;width:416px;height:16px;border-radius:8px;background:linear-gradient(to right,#f00 0%,#ff0 16.66%,#0f0 33.33%,#0ff 50%,#00f 66.66%,#f0f 83.33%,#f00 100%)"></div>
<div class="abs" style="left:1346.5px;top:1557.5px;width:21px;height:21px;border-radius:50%;border:4.5px solid #fff;background:#f25a0a;box-shadow:0 0 0 1px rgba(0,0,0,.25)"></div>
<div class="abs" style="left:1328px;top:1608px;width:416px;height:16px;border-radius:8px;background:linear-gradient(to right,rgba(244,106,35,0),#f46a23),conic-gradient(#b4b4b4 25%,#fff 0 50%,#b4b4b4 0 75%,#fff 0) 10px 0/20px 20px"></div>
<div class="abs" style="left:1727.5px;top:1605.5px;width:21px;height:21px;border-radius:50%;border:4.5px solid #fff;background:#e8651f;box-shadow:0 0 0 1px rgba(0,0,0,.25)"></div>
<!-- BOTTOM TIMELINE -->
<style>.tl{font-size:18.5px;color:#717075;letter-spacing:.45px}.tc{width:120px;text-align:center}</style>
<div id="bottom" class="abs"></div>
<div class="t tl" id="tm" style="left:26.79px;top:1692.8px;letter-spacing:0.32px">01:06.67</div>
<div class="t tl" id="tl0" style="left:143.79px;top:1692.58px;letter-spacing:0.56px">0m0.0s</div>
<div class="t tl" id="tl1" style="left:331.95px;top:1692.8px;letter-spacing:0.43px">0m27.1s</div>
<div class="t tl" id="tl2" style="left:531.5px;top:1692.8px;letter-spacing:0.55px">0m54.3s</div>
<div class="t tl" id="tl3" style="left:732.08px;top:1692.8px;letter-spacing:0.43px">1m21.4s</div>
<div class="t tl" id="tl4" style="left:930.99px;top:1692.79px;letter-spacing:0.55px">1m48.6s</div>
<div class="t tl" id="tl5" style="left:1131.11px;top:1692.8px;letter-spacing:0.51px">2m15.7s</div>
<div class="t tl" id="tl6" style="left:1329.31px;top:1692.8px;letter-spacing:0.59px">2m42.8s</div>
<div class="t tl" id="tl7" style="left:1529.44px;top:1692.79px;letter-spacing:0.55px">3m10.0s</div>
<div class="t tl" id="tl8" style="left:1729.3px;top:1692.8px;letter-spacing:0.47px">3m37.1s</div>
<div class="t tl" id="tl9" style="left:1930.0px;top:1692.79px;letter-spacing:0.28px">4m4.3s</div>
<svg style="left:0;top:1670px" width="2400" height="60" fill="#e0e0e2"><circle cx="236.0" cy="30" r="3.8"/><circle cx="269.6" cy="30" r="3.8"/><circle cx="303.0" cy="30" r="3.8"/><circle cx="435.5" cy="30" r="3.8"/><circle cx="468.8" cy="30" r="3.8"/><circle cx="502.1" cy="30" r="3.8"/><circle cx="635.1" cy="30" r="3.8"/><circle cx="668.4" cy="30" r="3.8"/><circle cx="701.7" cy="30" r="3.8"/><circle cx="834.7" cy="30" r="3.8"/><circle cx="868.0" cy="30" r="3.8"/><circle cx="901.3" cy="30" r="3.8"/><circle cx="1034.3" cy="30" r="3.8"/><circle cx="1067.6" cy="30" r="3.8"/><circle cx="1100.9" cy="30" r="3.8"/><circle cx="1233.9" cy="30" r="3.8"/><circle cx="1267.2" cy="30" r="3.8"/><circle cx="1300.5" cy="30" r="3.8"/><circle cx="1433.5" cy="30" r="3.8"/><circle cx="1466.8" cy="30" r="3.8"/><circle cx="1500.1" cy="30" r="3.8"/><circle cx="1633.1" cy="30" r="3.8"/><circle cx="1666.4" cy="30" r="3.8"/><circle cx="1699.7" cy="30" r="3.8"/><circle cx="1832.7" cy="30" r="3.8"/><circle cx="1866.0" cy="30" r="3.8"/><circle cx="1899.3" cy="30" r="3.8"/></svg>
<div class="t tl" id="st" style="left:2089.67px;top:1692.8px;letter-spacing:-0.43px">START</div>
<div class="t tl" id="en" style="left:2278.5px;top:1692.8px;letter-spacing:0.06px">END</div>
<div class="abs" style="left:16px;top:1720px;width:96px;height:64px;border:4px solid #cdcdd0;border-radius:32px;background:#fff"></div>
<svg style="left:54px;top:1739px" width="20" height="26" viewBox="0 0 20 26"><path d="M2 2.5v21L18 13z" fill="#19161d" stroke="#19161d" stroke-width="2.4" stroke-linejoin="round"/></svg>
<div class="abs" style="left:128px;top:1720px;width:1880px;height:64px;border-radius:14px;background:#e5e5e7;overflow:hidden">
  <div class="abs" style="left:0;top:0;width:24px;height:64px;background:#cbcbce"></div>
  <div class="abs" style="left:1856px;top:0;width:24px;height:64px;background:#cbcbce"></div>
  <svg style="left:0;top:0" width="1880" height="64"><path d="M24 31.2H26V31.2H28V31.2H30V31.2H32V31.2H34V31.1H36V31.1H38V31.1H40V31.0H42V29.7H44V28.2H46V26.8H48V26.6H50V28.5H52V30.0H54V30.3H56V30.5H58V30.8H60V30.4H62V30.1H64V29.7H66V30.0H68V29.3H70V27.2H72V26.0H74V23.8H76V24.2H78V20.0H80V20.0H82V24.5H84V25.5H86V26.7H88V27.2H90V29.1H92V29.8H94V29.5H96V30.2H98V30.0H100V28.6H102V27.8H104V26.7H106V26.6H108V29.0H110V30.0H112V30.0H114V28.9H116V28.5H118V28.7H120V25.8H122V24.7H124V22.5H126V20.3H128V19.7H130V20.2H132V20.2H134V18.7H136V18.3H138V18.0H140V18.5H142V19.0H144V21.8H146V20.0H148V23.1H150V21.0H152V25.7H154V24.1H156V22.5H158V25.1H160V24.3H162V24.5H164V24.9H166V26.3H168V26.4H170V26.2H172V25.9H174V27.3H176V25.4H178V24.6H180V23.7H182V25.2H184V21.7H186V20.3H188V19.0H190V20.2H192V21.5H194V24.6H196V25.8H198V25.8H200V24.7H202V24.2H204V26.3H206V26.6H208V24.5H210V25.3H212V25.5H214V25.7H216V24.7H218V24.0H220V24.6H222V24.3H224V24.9H226V22.2H228V24.4H230V20.7H232V19.9H234V18.0H236V19.0H238V18.2H240V18.3H242V18.4H244V18.6H246V18.7H248V19.7H250V18.9H252V19.0H254V18.8H256V19.6H258V18.4H260V18.2H262V18.0H264V17.8H266V17.6H268V17.4H270V17.2H272V17.0H274V17.0H276V17.0H278V17.0H280V17.0H282V17.0H284V17.0H286V17.0H288V17.0H290V17.0H292V17.0H294V16.9H296V16.8H298V16.7H300V16.6H302V17.1H304V16.4H306V16.3H308V16.2H310V21.9H312V16.0H314V16.1H316V20.8H318V22.1H320V16.3H322V17.9H324V16.4H326V16.5H328V16.5H330V16.6H332V16.7H334V16.7H336V20.8H338V16.9H340V16.9H342V17.0H344V17.0H346V17.0H348V16.9H350V16.9H352V16.9H354V16.9H356V17.7H358V17.6H360V16.8H362V17.9H364V16.7H366V16.7H368V17.0H370V16.7H372V16.6H374V17.6H376V16.6H378V17.1H380V20.9H382V16.5H384V47.1H382V42.3H380V46.6H378V46.5H376V45.2H374V46.6H372V46.3H370V46.2H368V46.7H366V47.2H364V46.0H362V46.3H360V46.3H358V45.8H356V45.6H354V46.1H352V47.0H350V46.4H348V45.8H346V46.5H344V46.1H342V47.0H340V46.1H338V42.2H336V46.3H334V46.0H332V46.3H330V45.9H328V46.3H326V47.0H324V45.4H322V46.4H320V41.9H318V42.3H316V47.3H314V46.8H312V41.5H310V47.4H308V47.3H306V46.7H304V46.3H302V47.0H300V46.8H298V47.1H296V45.8H294V46.3H292V47.0H290V46.8H288V46.0H286V46.6H284V46.0H282V46.5H280V46.2H278V45.9H276V45.5H274V46.5H272V45.8H270V46.3H268V45.4H266V45.3H264V45.5H262V45.5H260V44.7H258V44.1H256V44.3H254V44.5H252V45.1H250V43.3H248V44.6H246V44.8H244V45.5H242V45.7H240V44.8H238V43.9H236V45.7H234V44.1H232V43.2H230V39.6H228V41.8H226V39.1H224V39.7H222V39.4H220V40.0H218V39.3H216V38.3H214V38.5H212V38.7H210V39.5H208V37.4H206V37.7H204V39.8H202V39.3H200V38.2H198V38.2H196V39.4H194V41.8H192V43.2H190V44.1H188V43.2H186V41.4H184V38.8H182V40.3H180V39.4H178V38.6H176V36.7H174V38.1H172V37.8H170V37.6H168V37.7H166V39.1H164V39.5H162V39.7H160V38.9H158V41.5H156V39.9H154V38.3H152V42.5H150V40.9H148V43.8H146V41.2H144V44.6H142V44.6H140V45.7H138V44.8H136V44.0H134V42.9H132V42.8H130V44.2H128V43.3H126V41.5H124V39.3H122V38.2H120V35.3H118V35.5H116V35.1H114V34.0H112V34.0H110V35.0H108V37.4H106V37.3H104V36.2H102V35.4H100V34.0H98V33.8H96V34.5H94V34.2H92V34.9H90V36.8H88V37.3H86V38.5H84V39.5H82V43.5H80V43.1H78V39.8H76V40.2H74V38.0H72V36.8H70V34.7H68V34.0H66V34.3H64V33.9H62V33.6H60V33.2H58V33.5H56V33.7H54V34.0H52V35.5H50V37.4H48V37.2H46V35.8H44V34.3H42V33.0H40V33.0H38V32.9H36V32.9H34V32.8H32V32.8H30V32.8H28V32.8H26V32.8H24Z" fill="#cdcdd0"/><path d="M880 16.5H882V22.0H884V16.5H886V17.7H888V16.5H890V21.4H892V16.5H894V16.5H896V16.5H898V20.1H900V16.5H902V16.5H904V16.5H906V16.5H908V16.5H910V16.5H912V17.5H914V16.5H916V16.5H918V17.5H920V16.5H922V16.5H924V19.9H926V16.5H928V16.9H930V22.1H932V16.5H934V16.5H936V16.5H938V16.5H940V16.5H942V17.3H944V16.5H946V16.5H948V17.3H950V16.5H952V17.5H954V20.1H956V16.5H958V16.5H960V16.5H962V16.5H964V21.7H966V16.5H968V16.5H970V16.5H972V16.5H974V16.5H976V16.5H978V16.5H980V16.5H982V16.5H984V16.5H986V17.6H988V16.5H990V16.5H992V17.6H994V16.5H996V17.1H998V17.0H1000V16.5H1002V17.7H1004V16.5H1006V17.9H1008V16.5H1010V22.6H1012V16.5H1014V16.5H1016V16.5H1018V16.5H1020V16.5H1022V16.5H1024V17.2H1026V17.5H1028V16.5H1030V17.3H1032V17.1H1034V18.0H1036V16.5H1038V16.5H1040V17.7H1042V17.9H1044V17.5H1046V16.5H1048V17.4H1050V16.5H1052V16.5H1054V17.4H1056V16.5H1058V16.5H1060V16.5H1062V17.9H1064V16.5H1066V17.3H1068V16.5H1070V16.5H1072V17.3H1074V16.5H1076V16.5H1078V16.5H1080V17.5H1082V18.0H1084V16.5H1086V17.7H1088V16.5H1090V16.5H1092V17.5H1094V20.8H1096V17.4H1098V16.5H1100V17.1H1102V16.5H1104V16.5H1106V17.5H1108V21.4H1110V28.7H1112V29.6H1114V27.9H1116V25.7H1118V25.4H1120V23.3H1122V21.2H1124V19.6H1126V19.4H1128V16.5H1130V16.5H1132V31.0H1134V16.5H1136V16.5H1138V16.5H1140V16.5H1142V17.2H1144V16.8H1146V17.9H1148V16.5H1150V17.2H1152V16.5H1154V16.5H1156V16.5H1158V16.5H1160V16.5H1162V16.5H1164V16.5H1166V16.5H1168V17.5H1170V16.5H1172V16.5H1174V16.5H1176V16.5H1178V16.5H1180V16.5H1182V16.5H1184V16.5H1186V16.5H1188V16.5H1190V16.5H1192V16.5H1194V16.5H1196V16.5H1198V17.8H1200V16.5H1202V16.5H1204V16.5H1206V17.7H1208V16.5H1210V16.5H1212V16.5H1214V16.5H1216V16.5H1218V16.5H1220V17.7H1222V18.0H1224V16.5H1226V16.5H1228V16.5H1230V16.5H1232V16.5H1234V16.5H1236V16.5H1238V16.5H1240V19.7H1242V18.0H1244V17.6H1246V18.0H1248V16.5H1250V16.5H1252V16.5H1254V16.5H1256V16.5H1258V16.5H1260V16.5H1262V16.5H1264V16.5H1266V16.5H1268V16.5H1270V16.5H1272V16.5H1274V16.5H1276V16.5H1278V16.5H1280V17.4H1282V16.5H1284V16.5H1286V17.7H1288V17.5H1290V20.8H1292V16.5H1294V16.5H1296V18.0H1298V16.5H1300V16.5H1302V16.5H1304V16.5H1306V17.5H1308V16.5H1310V17.0H1312V16.5H1314V16.5H1316V17.1H1318V16.5H1320V16.5H1322V16.5H1324V16.5H1326V16.5H1328V16.5H1330V16.5H1332V16.5H1334V17.5H1336V16.5H1338V17.9H1340V16.5H1342V17.6H1344V17.6H1346V16.5H1348V17.0H1350V16.5H1352V16.5H1354V17.7H1356V16.5H1358V18.7H1360V20.8H1362V24.0H1364V24.0H1366V24.7H1368V25.7H1370V26.2H1372V27.3H1374V27.4H1376V27.4H1378V28.8H1380V29.4H1382V24.6H1384V26.4H1386V28.9H1388V30.5H1390V30.6H1392V30.6H1394V30.7H1396V30.8H1398V30.8H1400V30.9H1402V31.0H1404V29.8H1406V27.7H1408V28.0H1410V27.2H1412V25.2H1414V24.1H1416V25.5H1418V24.8H1420V22.6H1422V24.5H1424V24.4H1426V26.7H1428V26.7H1430V28.0H1432V28.6H1434V29.1H1436V30.0H1438V30.5H1440V30.5H1442V30.6H1444V30.6H1446V30.6H1448V30.6H1450V30.7H1452V30.7H1454V30.7H1456V30.8H1458V30.8H1460V24.0H1462V16.5H1464V16.5H1466V16.5H1468V16.5H1470V16.5H1472V16.5H1474V16.5H1476V16.5H1478V17.1H1480V16.5H1482V17.5H1484V16.5H1486V16.5H1488V16.5H1490V18.0H1492V16.5H1494V16.5H1496V16.5H1498V16.5H1500V16.5H1502V16.9H1504V16.5H1506V16.5H1508V16.8H1510V17.5H1512V17.8H1514V16.5H1516V17.9H1518V16.5H1520V16.5H1522V17.8H1524V17.8H1526V16.5H1528V16.5H1530V16.5H1532V16.5H1534V16.5H1536V16.5H1538V21.8H1540V18.0H1542V16.5H1544V16.5H1546V16.5H1548V16.5H1550V16.5H1552V16.5H1554V17.9H1556V16.5H1558V21.7H1560V17.2H1562V17.1H1564V16.5H1566V16.5H1568V16.5H1570V16.5H1572V16.5H1574V17.5H1576V17.1H1578V16.5H1580V16.5H1582V16.5H1584V16.5H1586V17.5H1588V16.5H1590V16.5H1592V17.9H1594V21.0H1596V21.8H1598V16.5H1600V17.6H1602V16.5H1604V17.7H1606V16.5H1608V16.5H1610V17.2H1612V16.5H1614V16.5H1616V16.5H1618V16.5H1620V16.5H1622V16.5H1624V16.5H1626V16.5H1628V16.5H1630V17.3H1632V17.1H1634V16.5H1636V16.5H1638V16.5H1640V16.5H1642V16.5H1644V16.5H1646V17.1H1648V16.5H1650V16.5H1652V16.5H1654V16.5H1656V16.5H1658V17.5H1660V16.5H1662V16.5H1664V16.5H1666V16.5H1668V16.5H1670V16.5H1672V16.5H1674V19.4H1676V16.5H1678V16.9H1680V17.0H1682V16.5H1684V16.5H1686V16.5H1688V16.5H1690V17.9H1692V16.5H1694V16.5H1696V17.3H1698V17.4H1700V17.1H1702V16.5H1704V16.5H1706V16.5H1708V19.6H1710V21.8H1712V16.5H1714V16.5H1716V16.5H1718V16.5H1720V16.8H1722V16.5H1724V16.5H1726V16.5H1728V16.5H1730V16.5H1732V17.5H1734V16.8H1736V16.5H1738V16.5H1740V16.5H1742V22.3H1744V16.5H1746V16.5H1748V17.7H1750V17.0H1752V17.9H1754V16.5H1756V16.5H1758V16.5H1760V16.5H1762V16.5H1764V16.5H1766V18.0H1768V17.5H1770V16.5H1772V16.5H1774V16.5H1776V16.5H1778V16.8H1780V16.5H1782V16.5H1784V17.7H1786V16.5H1788V21.5H1790V17.8H1792V16.5H1794V16.5H1796V16.5H1798V16.5H1800V16.5H1802V17.1H1804V16.5H1806V16.5H1808V17.8H1810V19.5H1812V16.5H1814V17.1H1816V17.0H1818V21.1H1820V16.5H1822V17.7H1824V16.5H1826V16.5H1828V16.5H1830V16.5H1832V16.5H1834V17.1H1836V18.6H1838V21.7H1840V20.1H1842V19.4H1844V20.0H1846V21.8H1848V25.5H1850V25.7H1852V28.8H1854V29.8H1856V34.2H1854V35.2H1852V38.3H1850V38.5H1848V41.9H1846V43.6H1844V43.8H1842V42.7H1840V41.6H1838V44.3H1836V46.5H1834V46.9H1832V47.4H1830V46.6H1828V46.7H1826V46.7H1824V45.8H1822V46.5H1820V42.0H1818V46.9H1816V46.2H1814V46.6H1812V44.5H1810V45.0H1808V46.6H1806V46.7H1804V46.5H1802V46.1H1800V46.0H1798V47.1H1796V47.4H1794V46.4H1792V45.5H1790V41.8H1788V47.0H1786V45.8H1784V47.1H1782V47.2H1780V46.1H1778V47.3H1776V47.3H1774V46.2H1772V46.7H1770V46.4H1768V45.4H1766V46.3H1764V47.2H1762V46.0H1760V47.4H1758V46.0H1756V46.4H1754V45.9H1752V46.2H1750V45.6H1748V46.5H1746V46.0H1744V41.7H1742V46.2H1740V46.8H1738V47.0H1736V46.6H1734V45.2H1732V47.2H1730V46.7H1728V46.4H1726V46.8H1724V46.1H1722V46.5H1720V47.4H1718V46.7H1716V46.0H1714V47.1H1712V42.2H1710V43.6H1708V47.4H1706V47.3H1704V47.1H1702V45.6H1700V45.5H1698V46.0H1696V46.3H1694V47.4H1692V45.2H1690V46.0H1688V46.4H1686V46.7H1684V46.8H1682V45.8H1680V46.0H1678V46.0H1676V43.7H1674V46.8H1672V46.7H1670V47.5H1668V47.3H1666V47.0H1664V47.1H1662V47.1H1660V46.4H1658V47.2H1656V47.4H1654V46.9H1652V46.2H1650V47.2H1648V46.4H1646V47.4H1644V46.5H1642V46.8H1640V47.4H1638V47.1H1636V46.8H1634V45.7H1632V46.2H1630V47.0H1628V47.0H1626V47.0H1624V46.9H1622V47.0H1620V47.0H1618V46.0H1616V47.4H1614V46.8H1612V46.4H1610V46.7H1608V46.3H1606V46.1H1604V46.0H1602V45.9H1600V47.4H1598V41.4H1596V42.2H1594V46.0H1592V46.8H1590V46.2H1588V46.0H1586V46.4H1584V46.9H1582V46.4H1580V46.8H1578V45.9H1576V45.9H1574V46.1H1572V46.9H1570V46.7H1568V47.0H1566V46.1H1564V45.7H1562V46.2H1560V41.5H1558V46.3H1556V44.7H1554V47.2H1552V46.9H1550V46.6H1548V46.9H1546V47.2H1544V47.4H1542V45.0H1540V41.6H1538V46.4H1536V46.5H1534V47.4H1532V47.1H1530V47.3H1528V46.0H1526V45.8H1524V45.1H1522V47.2H1520V47.4H1518V46.1H1516V46.3H1514V46.2H1512V45.1H1510V46.9H1508V46.0H1506V46.4H1504V45.7H1502V46.9H1500V46.4H1498V47.3H1496V46.9H1494V46.3H1492V45.7H1490V46.7H1488V46.6H1486V46.3H1484V46.4H1482V46.4H1480V46.5H1478V47.5H1476V46.6H1474V47.4H1472V46.5H1470V46.1H1468V46.4H1466V46.2H1464V46.9H1462V40.0H1460V33.2H1458V33.2H1456V33.3H1454V33.3H1452V33.3H1450V33.4H1448V33.4H1446V33.4H1444V33.4H1442V33.5H1440V33.5H1438V34.0H1436V34.9H1434V35.4H1432V36.0H1430V37.3H1428V37.3H1426V39.6H1424V39.5H1422V41.4H1420V39.2H1418V38.5H1416V39.9H1414V38.8H1412V36.8H1410V36.0H1408V36.3H1406V34.2H1404V33.0H1402V33.1H1400V33.2H1398V33.2H1396V33.3H1394V33.4H1392V33.4H1390V33.5H1388V35.1H1386V37.6H1384V39.4H1382V34.6H1380V35.2H1378V36.6H1376V36.6H1374V36.7H1372V37.8H1370V38.3H1368V39.3H1366V40.0H1364V40.0H1362V42.7H1360V44.7H1358V46.7H1356V45.3H1354V46.0H1352V46.7H1350V46.0H1348V46.7H1346V45.2H1344V46.3H1342V46.4H1340V45.1H1338V46.3H1336V45.2H1334V46.2H1332V46.7H1330V46.0H1328V47.4H1326V46.1H1324V46.1H1322V46.4H1320V47.3H1318V46.0H1316V46.9H1314V46.3H1312V45.6H1310V46.3H1308V45.7H1306V46.8H1304V47.4H1302V47.2H1300V47.1H1298V44.6H1296V46.1H1294V46.5H1292V43.1H1290V45.2H1288V44.9H1286V46.5H1284V46.1H1282V46.4H1280V47.1H1278V46.3H1276V46.2H1274V47.1H1272V47.0H1270V46.6H1268V47.4H1266V47.1H1264V47.3H1262V47.1H1260V46.0H1258V46.6H1256V46.3H1254V47.3H1252V46.2H1250V47.1H1248V45.2H1246V45.1H1244V45.1H1242V44.3H1240V46.9H1238V47.1H1236V47.2H1234V47.1H1232V46.0H1230V46.7H1228V46.6H1226V46.1H1224V44.6H1222V46.0H1220V47.0H1218V47.1H1216V46.5H1214V46.4H1212V46.7H1210V46.9H1208V44.9H1206V46.9H1204V47.0H1202V46.3H1200V46.2H1198V46.7H1196V46.0H1194V47.1H1192V46.0H1190V46.2H1188V46.9H1186V46.7H1184V46.5H1182V47.2H1180V47.0H1178V46.4H1176V46.0H1174V47.1H1172V46.1H1170V45.6H1168V47.3H1166V46.4H1164V47.3H1162V46.9H1160V46.5H1158V46.1H1156V46.0H1154V46.3H1152V45.5H1150V47.3H1148V45.3H1146V45.9H1144V46.4H1142V46.2H1140V47.1H1138V46.3H1136V46.4H1134V33.0H1132V46.8H1130V46.6H1128V44.5H1126V43.8H1124V42.1H1122V40.7H1120V38.6H1118V38.3H1116V36.1H1114V34.4H1112V35.3H1110V42.5H1108V45.4H1106V46.8H1104V46.1H1102V45.6H1100V46.7H1098V46.5H1096V42.4H1094V45.3H1092V46.7H1090V47.2H1088V45.1H1086V47.3H1084V45.6H1082V45.5H1080V47.1H1078V46.5H1076V46.0H1074V46.5H1072V46.5H1070V46.1H1068V46.2H1066V47.3H1064V45.0H1062V47.2H1060V46.6H1058V46.8H1056V45.9H1054V46.2H1052V46.8H1050V46.1H1048V46.2H1046V45.9H1044V45.1H1042V46.2H1040V46.2H1038V47.3H1036V45.6H1034V45.8H1032V46.5H1030V47.1H1028V46.0H1026V45.5H1024V46.1H1022V46.3H1020V46.9H1018V46.1H1016V46.0H1014V46.7H1012V41.4H1010V46.8H1008V44.8H1006V47.3H1004V46.1H1002V46.9H1000V46.4H998V46.5H996V46.4H994V45.1H992V46.0H990V46.3H988V45.7H986V47.2H984V46.4H982V46.6H980V47.1H978V46.1H976V46.2H974V47.5H972V47.4H970V46.8H968V47.4H966V41.7H964V46.5H962V46.0H960V46.0H958V46.9H956V43.2H954V46.1H952V47.1H950V45.6H948V47.4H946V46.7H944V45.8H942V46.1H940V47.5H938V46.2H936V46.5H934V46.4H932V41.9H930V47.0H928V46.2H926V44.1H924V46.3H922V47.3H920V45.2H918V46.1H916V46.4H914V45.4H912V47.5H910V46.6H908V46.2H906V47.1H904V46.5H902V47.2H900V43.2H898V46.0H896V46.9H894V46.9H892V42.4H890V46.7H888V46.2H886V46.7H884V42.0H882V46.8H880Z" fill="#cdcdd0"/></svg>
  <div class="abs" style="left:407px;top:0;width:449px;height:64px;background:#6b4efc"></div>
  <svg style="left:0;top:0" width="1880" height="64"><path d="M408 17.7H410V16.5H412V16.5H414V16.5H416V16.5H418V16.5H420V17.6H422V17.5H424V16.5H426V21.8H428V16.5H430V18.0H432V17.3H434V16.5H436V16.5H438V17.0H440V17.0H442V16.5H444V17.7H446V16.5H448V17.4H450V17.9H452V16.5H454V19.9H456V16.5H458V16.5H460V16.5H462V19.8H464V16.5H466V16.5H468V16.9H470V16.5H472V20.6H474V21.4H476V20.7H478V16.5H480V17.7H482V16.9H484V20.3H486V16.5H488V16.5H490V16.5H492V17.7H494V17.9H496V17.1H498V16.5H500V20.4H502V20.7H504V16.5H506V17.1H508V16.5H510V19.5H512V22.3H514V16.5H516V16.5H518V16.5H520V21.6H522V17.6H524V16.5H526V16.5H528V16.5H530V17.3H532V17.9H534V22.6H536V16.5H538V16.5H540V16.9H542V17.5H544V22.2H546V17.6H548V21.8H550V21.7H552V18.0H554V16.9H556V16.5H558V16.5H560V16.5H562V16.5H564V22.0H566V21.9H568V16.8H570V17.5H572V16.5H574V21.9H576V16.5H578V16.8H580V20.0H582V20.8H584V17.6H586V19.6H588V16.5H590V18.0H592V21.8H594V18.0H596V16.5H598V17.6H600V21.6H602V16.9H604V16.5H606V20.9H608V17.6H610V16.5H612V17.5H614V22.3H616V17.9H618V16.5H620V22.4H622V17.9H624V17.7H626V16.5H628V21.7H630V21.3H632V16.5H634V16.5H636V16.5H638V17.0H640V16.5H642V16.5H644V16.5H646V22.5H648V21.8H650V18.0H652V18.0H654V21.5H656V16.5H658V21.2H660V18.0H662V16.5H664V20.9H666V16.5H668V16.5H670V21.6H672V17.5H674V16.5H676V16.8H678V19.9H680V19.4H682V17.5H684V17.8H686V20.8H688V16.5H690V17.7H692V16.5H694V16.5H696V19.9H698V22.1H700V20.3H702V20.0H704V16.5H706V16.5H708V18.0H710V17.8H712V18.0H714V17.5H716V16.8H718V16.5H720V16.5H722V16.5H724V17.2H726V18.0H728V17.3H730V16.5H732V16.5H734V16.5H736V16.5H738V16.5H740V16.5H742V16.5H744V20.9H746V19.4H748V18.0H750V20.5H752V16.5H754V17.9H756V17.2H758V16.5H760V17.7H762V16.5H764V16.5H766V22.5H768V17.0H770V16.5H772V17.4H774V17.7H776V16.5H778V22.3H780V17.3H782V20.7H784V16.5H786V21.0H788V16.5H790V16.5H792V16.5H794V16.5H796V17.9H798V22.4H800V20.6H802V16.5H804V16.5H806V16.5H808V16.5H810V16.5H812V22.5H814V21.4H816V16.5H818V21.3H820V17.9H822V17.2H824V16.5H826V20.1H828V17.9H830V17.1H832V17.7H834V16.5H836V17.7H838V16.5H840V21.3H842V16.5H844V17.9H846V16.5H848V16.9H850V17.0H852V16.5H854V21.8H856V41.6H854V46.5H852V45.5H850V45.7H848V46.8H846V45.3H844V46.1H842V41.9H840V46.8H838V45.4H836V47.2H834V45.6H832V46.7H830V45.4H828V43.6H826V47.4H824V46.1H822V45.5H820V42.2H818V47.1H816V42.0H814V41.5H812V46.1H810V46.9H808V47.4H806V47.2H804V47.1H802V42.4H800V41.6H798V44.9H796V47.3H794V46.3H792V47.0H790V46.4H788V42.8H786V47.1H784V42.9H782V45.5H780V41.7H778V46.2H776V45.7H774V46.5H772V46.6H770V46.8H768V41.5H766V47.1H764V46.2H762V45.7H760V46.3H758V45.9H756V45.6H754V46.9H752V43.4H750V45.1H748V44.0H746V42.9H744V46.9H742V47.2H740V47.3H738V47.0H736V46.1H734V46.4H732V46.4H730V46.3H728V44.8H726V46.1H724V46.5H722V46.8H720V47.0H718V46.9H716V46.1H714V45.0H712V45.3H710V45.3H708V47.2H706V47.3H704V43.2H702V43.6H700V41.9H698V43.5H696V46.6H694V47.3H692V46.2H690V46.3H688V42.5H686V45.2H684V46.4H682V43.4H680V43.4H678V46.5H676V47.4H674V45.7H672V42.3H670V47.2H668V46.6H666V42.2H664V47.1H662V45.4H660V42.1H658V46.9H656V42.4H654V44.7H652V45.7H650V41.9H648V41.5H646V46.5H644V46.4H642V47.1H640V46.4H638V46.8H636V47.0H634V46.8H632V42.0H630V41.6H628V46.0H626V44.9H624V45.3H622V41.6H620V46.4H618V45.7H616V41.7H614V46.3H612V47.4H610V45.9H608V42.6H606V46.3H604V46.5H602V41.4H600V45.8H598V46.2H596V44.7H594V41.6H592V45.2H590V46.0H588V43.7H586V45.1H584V43.2H582V43.3H580V45.7H578V47.0H576V41.8H574V47.1H572V45.5H570V46.2H568V41.2H566V42.0H564V47.1H562V46.4H560V46.1H558V46.7H556V46.6H554V45.9H552V41.5H550V41.4H548V46.3H546V41.8H544V45.2H542V46.5H540V46.0H538V46.7H536V41.4H534V44.7H532V46.3H530V46.8H528V46.6H526V47.0H524V45.2H522V42.0H520V46.5H518V46.2H516V47.0H514V41.7H512V44.1H510V46.0H508V45.5H506V46.7H504V42.5H502V42.5H500V47.0H498V45.6H496V45.0H494V45.9H492V46.4H490V46.8H488V46.7H486V42.7H484V46.2H482V45.8H480V46.2H478V43.0H476V41.6H474V42.3H472V46.6H470V45.8H468V46.2H466V47.4H464V43.2H462V47.0H460V47.5H458V46.0H456V43.8H454V46.1H452V45.6H450V45.9H448V46.2H446V46.0H444V47.0H442V45.6H440V45.8H438V46.5H436V46.7H434V46.2H432V45.7H430V47.3H428V41.6H426V46.9H424V45.6H422V45.4H420V46.4H418V46.1H416V46.9H414V46.7H412V46.4H410V45.1H408Z" fill="#c4b8fd"/></svg>
  <div class="abs" style="left:522px;top:0;width:8px;height:64px;background:#fff"></div>
  <div class="abs" style="left:524px;top:0;width:4px;height:64px;background:#19161d"></div>
</div>
<div class="abs" style="left:511px;top:1720px;width:28px;height:64px;border:4px solid #cdcdd0;border-right:0;border-radius:14px 0 0 14px;background:#fff;clip-path:inset(0 4px 0 0)"></div>
<div class="abs" style="left:521px;top:1748px;width:8px;height:8px;border-radius:50%;background:#a3a3a7"></div>
<div class="abs" style="left:980px;top:1720px;width:26.5px;height:64px;border:4px solid #cdcdd0;border-left:0;border-radius:0 14px 14px 0;background:#fff;clip-path:inset(0 0 0 4px)"></div>
<div class="abs" style="left:991px;top:1748px;width:8px;height:8px;border-radius:50%;background:#a3a3a7"></div>
<div class="abs" style="left:2024px;top:1720px;width:360px;height:64px;border:4px solid #cbcbce;border-radius:14px;background:#fff"></div>
<div class="t" id="t0" style="left:2043.81px;top:1741.6px;font-size:25.5px;color:#19161d;letter-spacing:1.01px">00:51.00</div>
<div class="t" id="t1" style="left:2258px;top:1741.6px;font-size:25.5px;color:#19161d;letter-spacing:1.06px">01:51.00</div>
<svg style="left:2189.5px;top:1737.8px" width="29" height="29" viewBox="0 0 26 26"><g fill="none" stroke="#77767b" stroke-width="2.3" stroke-linecap="round"><path d="M11 15L15 11"/><path d="M13.2 7.2L15.4 5A4 4 0 0 1 21 10.6L17.6 14A4 4 0 0 1 13 14.6"/><path d="M12.8 18.8L10.6 21A4 4 0 0 1 5 15.4L8.4 12A4 4 0 0 1 13 11.4"/></g></svg>
</body></html>
